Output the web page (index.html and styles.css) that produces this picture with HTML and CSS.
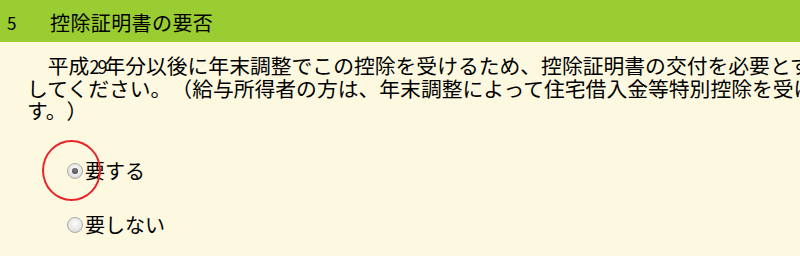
FILE: index.html
```html
<!DOCTYPE html>
<html lang="ja">
<head>
<meta charset="utf-8">
<link rel="stylesheet" href="styles.css">
</head>
<body>
<div class="page">
  <div class="header">
    <span class="num">5</span>
    <span class="title">控除証明書の要否</span>
  </div>
  <div class="content">
    <p class="desc">　平成<span class="hw">29</span>年分以後に年末調整でこの控除を受けるため、控除証明書の交付を必要とする場合は「要する」を選択<br>してください。（給与所得者の方は、年末調整によって住宅借入金等特別控除を受けることができま<br>す。）</p>
    <div class="options">
      <label class="option">
        <span class="radio checked"></span>
        <span class="label">要する</span>
        <span class="mark"></span>
      </label>
      <label class="option">
        <span class="radio"></span>
        <span class="label">要しない</span>
      </label>
    </div>
  </div>
</div>
</body>
</html>
```
FILE: styles.css
```css
html, body {
  margin: 0;
  padding: 0;
  background: #fdf8e0;
}
body {
  width: 800px;
  height: 256px;
  overflow: hidden;
  font-family: "Noto Sans CJK JP", "DejaVu Sans", sans-serif;
  color: #000;
  text-spacing-trim: space-all;
}
.page {
  width: 800px;
  overflow: hidden;
}
.header {
  height: 42px;
  box-sizing: border-box;
  padding-top: 3px;
  background: #9acd32;
  display: flex;
  align-items: center;
}
.num {
  box-sizing: border-box;
  width: 50px;
  padding-left: 7px;
  font-size: 17px;
}
.title {
  font-size: 20px;
  letter-spacing: 0.4px;
}
.content {
  padding: 12px 0 0 27px;
}
.desc {
  margin: 0;
  font-size: 20.8px;
  line-height: 22.5px;
  white-space: nowrap;
  text-spacing-trim: space-all;
}
.hw {
  display: inline-block;
  width: 15px;
  font-size: 18px;
  letter-spacing: -2px;
  line-height: 1;
  text-align: left;
  overflow: visible;
}
.options {
  display: flex;
  flex-direction: column;
  gap: 34px;
  padding: 39px 0 0 40px;
}
.option {
  position: relative;
  display: flex;
  align-items: center;
  height: 20px;
  font-size: 20px;
}
.radio {
  width: 14px;
  height: 14px;
  border-radius: 50%;
  border: 1px solid #a9a9a9;
  background: radial-gradient(circle at 50% 40%, #fbfbfb 0%, #e8e8e8 55%, #cdcdcd 100%);
  margin-right: 2px;
  position: relative;
}
.radio.checked::after {
  content: "";
  position: absolute;
  left: 4px;
  top: 4px;
  width: 6px;
  height: 6px;
  border-radius: 50%;
  background: radial-gradient(circle at 50% 40%, #808080, #3c3c3c);
}
.mark {
  position: absolute;
  left: -25px;
  top: -21px;
  width: 55px;
  height: 57px;
  border: 2.5px solid #e8262a;
  border-radius: 50%;
}
```
